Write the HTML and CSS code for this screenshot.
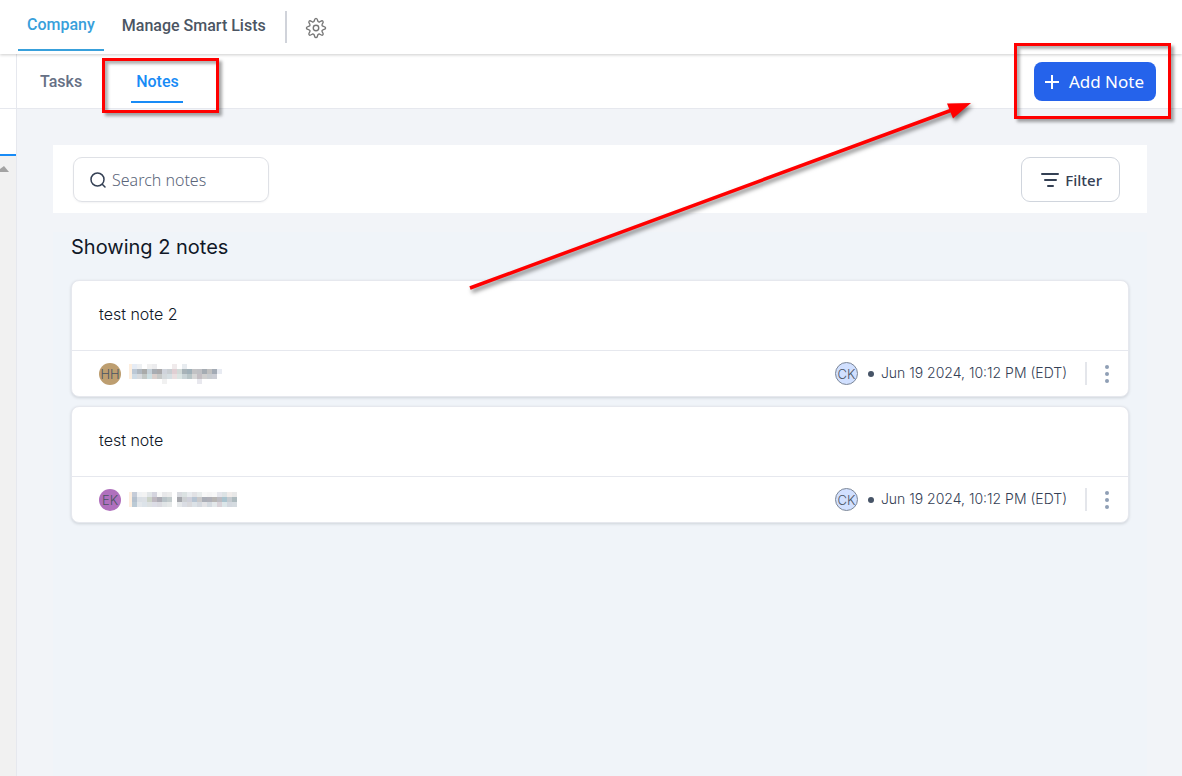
FILE: index.html
```html
<!doctype html>
<html lang="en">
<head>
    <meta charset="utf-8">
    <title>Company notes</title>
    <link rel="stylesheet" href="styles.css">
</head>
<body>
<header class="topbar">
    <nav class="topnav">
        <a class="toplink active" href="#company">Company</a>
        <a class="toplink" href="#lists">Manage Smart Lists</a>
    </nav>
    <span class="separator"></span>
    <button type="button" class="gear" aria-label="Settings">
        <svg width="22" height="22" viewBox="0 0 24 24" fill="none" stroke="#777" stroke-width="1.5" stroke-linejoin="round">
            <path d="M10 4.500C10.300 3.800 10.300 1.500 12 1.500s1.700 2.300 2 3c.3.800 1.300 1.200 2 .8.800-.3 2.300-2 3.500-.8s-.5 2.700-.8 3.500c-.4.700 0 1.700.8 2 .7.300 3 .3 3 2s-2.300 1.700-3 2c-.8.300-1.200 1.300-.8 2 .3.800 2 2.300.8 3.500s-2.700-.5-3.500-.8c-.7-.4-1.700 0-2 .8-.3.700-.3 3-2 3s-1.700-2.300-2-3c-.3-.8-1.300-1.200-2-.8-.8.300-2.300 2-3.500.8s.5-2.700.8-3.500c.4-.7 0-1.700-.8-2-.7-.3-3-.3-3-2s2.300-1.700 3-2c.8-.3 1.200-1.300.8-2-.3-.8-2-2.300-.8-3.500s2.700.5 3.500.8c.7.400 1.700 0 2-.8z"/>
            <circle cx="12" cy="12" r="3"/>
        </svg>
    </button>
</header>
<div class="layout">
    <aside class="side">
        <div class="side-top"></div>
        <div class="side-tab"></div>
        <div class="side-scroll"><span class="scroll-up"></span></div>
    </aside>
    <main class="main">
        <div class="tabs">
            <a class="tab" href="#tasks">Tasks</a>
            <div class="tab-box">
                <a class="tab current" href="#notes">Notes</a>
                <span class="mark mark-tab"></span>
            </div>
            <div class="add-box">
                <button type="button" class="add">
                    <svg width="16" height="16" viewBox="0 0 16 16" stroke="#fff" stroke-width="2"><path d="M8 1v14M1 8h14"/></svg>
                    Add Note
                </button>
                <span class="mark mark-add"></span>
            </div>
        </div>
        <div class="content">
            <div class="toolbar">
                <label class="search">
                    <svg width="18" height="18" viewBox="0 0 18 18" fill="none" stroke="#344054" stroke-width="1.5" stroke-linecap="round"><circle cx="8.500" cy="8.500" r="6.500"/><path d="M13.500 13.500l2.500 2.500"/></svg>
                    <input type="text" placeholder="Search notes" aria-label="Search notes">
                </label>
                <button type="button" class="filter">
                    <svg width="20" height="16" viewBox="0 0 20 16" stroke="#344054" stroke-width="2" stroke-linecap="round"><path d="M2 2h16M5 8h11M8 14h5"/></svg>
                    Filter
                </button>
            </div>
            <section class="notes">
                <h1 class="count">Showing 2 notes</h1>
                <article class="note">
                    <p class="note-text">test note 2</p>
                    <div class="note-foot">
                        <span class="avatar tan">HH</span>
                        <svg class="hidden-name" id="name1" width="110" height="20"></svg>
                        <span class="avatar blue">CK</span>
                        <span class="dot"></span>
                        <time class="date" datetime="2024-06-19T22:12-04:00">Jun 19 2024, 10:12 PM (EDT)</time>
                        <span class="rule"></span>
                        <button type="button" class="more" aria-label="Note options"><svg width="4" height="18" viewBox="0 0 4 18" fill="#8f9fb5"><circle cx="2" cy="2" r="2"/><circle cx="2" cy="9" r="2"/><circle cx="2" cy="16" r="2"/></svg></button>
                    </div>
                </article>
                <article class="note">
                    <p class="note-text">test note</p>
                    <div class="note-foot">
                        <span class="avatar purple">EK</span>
                        <svg class="hidden-name" id="name2" width="110" height="16"></svg>
                        <span class="avatar blue">CK</span>
                        <span class="dot"></span>
                        <time class="date" datetime="2024-06-19T22:12-04:00">Jun 19 2024, 10:12 PM (EDT)</time>
                        <span class="rule"></span>
                        <button type="button" class="more" aria-label="Note options"><svg width="4" height="18" viewBox="0 0 4 18" fill="#8f9fb5"><circle cx="2" cy="2" r="2"/><circle cx="2" cy="9" r="2"/><circle cx="2" cy="16" r="2"/></svg></button>
                    </div>
                </article>
            </section>
        </div>
    </main>
</div>
<svg class="arrow" width="520" height="200" viewBox="0 0 520 200">
    <path d="M8 190L490 12" stroke="#f00" stroke-width="3.500"/>
    <path d="M509 5l-24 .5 6 15z" fill="#f00"/>
</svg>
<script src="names.js"></script>
</body>
</html>
```
FILE: names.js
```js
// Author names are pixelated: one colour per 5px cell, "-" is an empty cell
var names = {
    name1: [
        'e6ecf5 eef0f2 - f1f1f1 ececee - - - f0ebec - e8ecf0 - - - - - - -',
        'bcc8d5 b0b8c0 a9aaa9 c5d0d8 a8adb3 aaa9ab d0d4dc c9ced2 e0cfd3 d2dad8 a8b3b8 a0b0b8 c2c2c4 bfc0c4 a5acb3 c0c0c0 a3abb5 e8ebf2',
        'cfdbe5 d7dade c3c8c6 cddfe2 d9cfcc c6c9c8 d5dadd d6dfe3 e9dfe0 dbe5e3 c9d3d6 b8c5c7 d6d6d6 c4bfc4 cfcfcf c8ccd0 cbcdd4 -',
        '- - - - - - f1f1f1 - - - - - - e8e8ee - - - -'
    ],
    name2: [
        'c5ccd8 f0f2f4 f3f3f3 e2e6e8 d5d5df f8f8f8 e8e8ea ececec - d9dbe0 dbe2e2 e9ecef e2e2e5 e8ecec f8f8f8 f5f5f5 f8f8f8 e5e6ec dde3e5 f0ecea e8e8e8',
        'b5c1ce dadfe5 dce0e5 ccd3c9 bfb9c1 adacb5 bac4c9 c3cccd - a5a7ac cdd0d3 cfd0da b7c5d3 cac9ca abafb8 b0b0b8 b8b6b4 bcbcc2 aac4cf c5cbd0 aebbbf',
        'bbcad5 e3e7eb dce3e9 dde1e2 dcdde6 dadae0 e0e4e6 e5e8e8 - e5e8ea dadde4 d9d9dc dce2e7 d5d9df e3e3e6 d4dae0 e3e8ea d8d2d8 dce6e9 d3d8df d5dbe0'
    ]
};

function cell(svg, x, y, width, color) {
    var rect = document.createElementNS('http://www.w3.org/2000/svg', 'rect');
    rect.setAttribute('x', x);
    rect.setAttribute('y', y);
    rect.setAttribute('width', width);
    rect.setAttribute('height', 5);
    rect.setAttribute('fill', color);
    svg.appendChild(rect);
}

for (var id in names) {
    var svg = document.getElementById(id);
    names[id].forEach(function (row, y) {
        if (y < 3) {
            cell(svg, 0, y * 5, 3, '#fdeedf');
        }
        row.split(' ').forEach(function (color, x) {
            if (color !== '-') {
                cell(svg, 3 + x * 5, y * 5, 5, '#' + color);
            }
        });
    });
}
```
FILE: styles.css
```css
* {
    box-sizing: border-box;
}

body {
    margin: 0;
    min-height: 100vh;
    display: flex;
    flex-direction: column;
    background: #f2f4f8;
    font-family: Inter, "Liberation Sans", sans-serif;
    color: #101828;
}

a {
    text-decoration: none;
}

button {
    border: none;
    padding: 0;
    background: none;
    font: inherit;
}

.topbar {
    position: relative;
    display: flex;
    align-items: center;
    height: 54px;
    padding-left: 18px;
    background: #fff;
    box-shadow: 0 1px 3px rgba(0, 0, 0, 0.2);
}

.topnav {
    display: flex;
    align-self: stretch;
    gap: 9px;
}

.toplink {
    height: 51px;
    padding: 0 9px;
    font: 500 16px/52px Roboto, sans-serif;
    color: #4b5563;
}

.toplink.active {
    border-bottom: 2px solid #38a0db;
    line-height: 50px;
    color: #38a0db;
}

.separator {
    width: 2px;
    height: 32px;
    margin: 0 18px 0 10px;
    background: #d0d3da;
}

.gear {
    padding-top: 1px;
}

.gear svg,
.more svg,
.filter svg,
.add svg {
    display: block;
}

.layout {
    flex: 1;
    display: flex;
}

.side {
    width: 17px;
    display: flex;
    flex-direction: column;
    border-right: 1px solid #e6e8ee;
    background: #fff;
}

.side-top {
    height: 55px;
    border-bottom: 1px solid #e6e8ee;
}

.side-tab {
    height: 47px;
    border-bottom: 2px solid #188bf6;
}

.side-scroll {
    flex: 1;
    padding-top: 10px;
    background: #f1f1f1;
}

.scroll-up {
    display: block;
    width: 9px;
    height: 6px;
    background: #a3a3a3;
    clip-path: polygon(0 100%, 0 50%, 4px 0, 100% 100%);
}

.main {
    flex: 1;
    display: flex;
    flex-direction: column;
}

.tabs {
    display: flex;
    align-items: center;
    height: 55px;
    padding: 1px 26px 0 23px;
    border-bottom: 1px solid #e6e8ee;
    background: #fff;
}

.tab {
    display: block;
    font: 500 16px/38px Roboto, sans-serif;
    color: #667085;
}

.tab-box {
    position: relative;
    margin-left: 49px;
}

.tab.current {
    padding: 2px 4px 0 5px;
    border-bottom: 2px solid #188bf6;
    color: #188bf6;
}

.add-box {
    position: relative;
    margin-left: auto;
}

.add {
    display: flex;
    align-items: center;
    gap: 9px;
    height: 39px;
    padding: 0 12px 0 10px;
    border-radius: 8px;
    background: #2563eb;
    color: #fff;
    font: 17px "Noto Sans", sans-serif;
}

/* red highlight frames */
.mark {
    position: absolute;
    border: 3px solid #f00;
    box-shadow: 3px 3px 3px rgba(0, 0, 0, 0.35), inset 3px 3px 3px rgba(0, 0, 0, 0.3);
    pointer-events: none;
}

.mark-tab {
    inset: -3px -36px -10px -29px;
}

.mark-add {
    inset: -19px -15px -18px -20px;
}

.content {
    flex: 1;
    display: flex;
    flex-direction: column;
    margin: 36px 35px 0 36px;
}

.toolbar {
    display: flex;
    justify-content: space-between;
    align-items: center;
    height: 68px;
    padding: 1px 27px 0 20px;
    background: #fff;
}

.search {
    display: flex;
    align-items: center;
    gap: 5px;
    width: 196px;
    height: 45px;
    padding: 0 15px;
    border: 1px solid #dfe1e6;
    border-radius: 9px;
    box-shadow: 0 1px 2px rgba(16, 24, 40, 0.05);
}

.search svg {
    flex: none;
}

.search input {
    width: 100%;
    min-width: 0;
    padding: 0;
    border: none;
    outline: none;
    font: 300 16px "Noto Sans", sans-serif;
    color: #344054;
}

.search input::placeholder {
    color: #5a6579;
    opacity: 1;
}

.filter {
    display: flex;
    align-items: center;
    gap: 5px;
    height: 45px;
    padding: 0 17px 0 18px;
    border: 1px solid #d0d5dd;
    border-radius: 9px;
    background: #fff;
    color: #344054;
    font: 500 15px "Noto Sans", sans-serif;
}

.notes {
    flex: 1;
    margin-top: 19px;
    padding: 1px 18px 0;
    background: #f0f4f9;
}

.count {
    margin: 0 0 19px;
    font-size: 20px;
    line-height: 28px;
    font-weight: 400;
}

.note {
    margin-bottom: 9px;
    border: 1px solid #e6e8ee;
    border-radius: 8px;
    background: #fff;
    box-shadow: 0 1px 3px rgba(16, 24, 40, 0.15);
}

.note-text {
    height: 69px;
    margin: 0;
    padding-left: 27px;
    font-size: 16px;
    line-height: 66px;
    font-weight: 300;
}

.note-foot {
    display: flex;
    align-items: center;
    height: 46px;
    padding: 0 19px 0 27px;
    border-top: 1px solid #e6e8ee;
    font-size: 14px;
    line-height: 16px;
    font-weight: 300;
    color: #344054;
}

.avatar {
    width: 22px;
    height: 22px;
    border-radius: 50%;
    font-size: 13px;
    line-height: 23px;
    text-align: center;
    color: #4b5563;
}

.tan {
    background: #bd9e70;
}

.purple {
    background: #b070bd;
}

.blue {
    width: 23px;
    height: 23px;
    margin-left: auto;
    border: 1px solid #7c8798;
    background: #d1e0ff;
}

.hidden-name {
    margin-left: 8px;
    shape-rendering: crispEdges;
}

.dot {
    width: 6px;
    height: 6px;
    margin: 0 7px 0 10px;
    border-radius: 50%;
    background: #475467;
}

.date {
    padding-bottom: 2px;
}

.rule {
    width: 2px;
    height: 23px;
    margin: 0 18px;
    background: #e4e6eb;
}

.arrow {
    position: absolute;
    left: 462px;
    top: 98px;
    filter: drop-shadow(2px 3px 2px rgba(0, 0, 0, 0.5));
    pointer-events: none;
}
```
